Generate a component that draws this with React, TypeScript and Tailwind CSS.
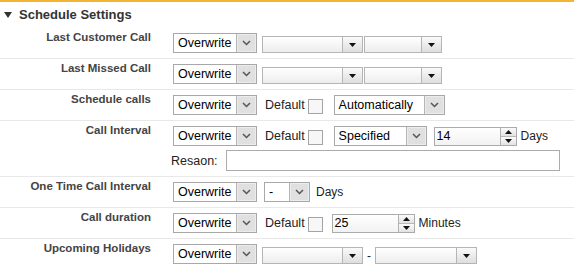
import React from "react";

function Chevron() {
  return (
    <svg width="9" height="6" viewBox="0 0 9 6">
      <path d="M1 1 L4.5 4.5 L8 1" stroke="#555" strokeWidth="1.5" fill="none" />
    </svg>
  );
}

function DownTri() {
  return (
    <svg width="7" height="4" viewBox="0 0 7 4">
      <polygon points="0,0 7,0 3.5,4" fill="#111" />
    </svg>
  );
}

function UpTri() {
  return (
    <svg width="7" height="4" viewBox="0 0 7 4">
      <polygon points="0,4 7,4 3.5,0" fill="#111" />
    </svg>
  );
}

function Select({ value, w }: { value: string; w: string }) {
  return (
    <div className={`flex h-[20px] border border-[#a8a8a8] bg-white shrink-0 ${w}`}>
      <span className="flex-1 pl-[4px] text-[12.5px] leading-[18px] text-black whitespace-nowrap overflow-hidden">{value}</span>
      <div className="w-[20px] border-l border-[#b4b4b4] bg-[#e0e0e0] flex items-center justify-center shadow-[inset_0_0_0_1px_#ececec]">
        <Chevron />
      </div>
    </div>
  );
}

function Combo({ w }: { w: string }) {
  return (
    <div className={`flex h-[17px] self-end border border-[#b5b5b5] bg-linear-to-b from-white to-[#ededed] shrink-0 ${w}`}>
      <span className="flex-1" />
      <div className="w-[20px] border-l border-[#b5b5b5] bg-linear-to-b from-[#fafafa] to-[#dedede] flex items-center justify-center">
        <DownTri />
      </div>
    </div>
  );
}

function Spinner({ value, w }: { value: string; w: string }) {
  return (
    <div className={`flex h-[19px] self-end border border-[#ababab] bg-linear-to-b from-white to-[#f2f2f2] shrink-0 ${w}`}>
      <span className="flex-1 pl-[2px] text-[12.5px] leading-[17px] text-black">{value}</span>
      <div className="w-[16px] border-l border-[#b0b0b0] flex flex-col">
        <div className="flex-1 flex items-center justify-center bg-linear-to-b from-[#fbfbfb] to-[#e2e2e2] border-b border-[#b8b8b8]">
          <UpTri />
        </div>
        <div className="flex-1 flex items-center justify-center bg-linear-to-b from-[#fbfbfb] to-[#e2e2e2]">
          <DownTri />
        </div>
      </div>
    </div>
  );
}

function Check() {
  return <div className="w-[15px] h-[15px] self-end mb-[1px] border border-[#a4a4a4] bg-[#f7f7f7] shrink-0" />;
}

function Txt({ children, cls = "" }: { children: React.ReactNode; cls?: string }) {
  return <span className={`text-[12.5px] leading-[16px] text-[#222] whitespace-nowrap ${cls}`}>{children}</span>;
}

function Row({ label, children, extra }: { label: string; children: React.ReactNode; extra?: React.ReactNode }) {
  return (
    <div className="flex border-b border-[#e8e8e8] pt-[3px] pb-[5px]">
      <div className="w-[151px] shrink-0 text-right font-bold text-[11.5px] leading-[12px] text-[#444] whitespace-nowrap">{label}</div>
      <div className="ml-[22px] pt-[2px] flex flex-col gap-[4px]">
        <div className="flex items-center h-[20px]">{children}</div>
        {extra}
      </div>
    </div>
  );
}

export default function App() {
  return (
    <div className="w-[574px] h-[278px] bg-white border-t-2 border-[#f2b431] font-['Liberation_Sans',Arial,sans-serif] overflow-hidden">
      <div className="flex items-center pt-[5px] pb-[5px] h-[26px]">
        <svg className="ml-[4px]" width="8" height="6" viewBox="0 0 8 6">
          <polygon points="0,0 8,0 4,6" fill="#333" />
        </svg>
        <span className="ml-[7px] font-bold text-[13px] leading-[16px] text-[#333]">Schedule Settings</span>
      </div>

      <Row label="Last Customer Call">
        <Select value="Overwrite" w="w-[84px]" />
        <div className="ml-[5px] flex gap-[1px] self-end">
          <Combo w="w-[101px]" />
          <Combo w="w-[78px]" />
        </div>
      </Row>

      <Row label="Last Missed Call">
        <Select value="Overwrite" w="w-[84px]" />
        <div className="ml-[5px] flex gap-[1px] self-end">
          <Combo w="w-[101px]" />
          <Combo w="w-[78px]" />
        </div>
      </Row>

      <Row label="Schedule calls">
        <Select value="Overwrite" w="w-[84px]" />
        <Txt cls="ml-[8px]">Default</Txt>
        <div className="ml-[3px] flex self-end"><Check /></div>
        <div className="ml-[11px]"><Select value="Automatically" w="w-[111px]" /></div>
      </Row>

      <Row
        label="Call Interval"
        extra={
          <div className="flex items-center h-[21px]">
            <Txt cls="-ml-[2px]">Resaon:</Txt>
            <div className="ml-[8px] w-[334px] h-[21px] border border-[#ababab] bg-white" />
          </div>
        }
      >
        <Select value="Overwrite" w="w-[84px]" />
        <Txt cls="ml-[8px]">Default</Txt>
        <div className="ml-[3px] flex self-end"><Check /></div>
        <div className="ml-[11px]"><Select value="Specified" w="w-[93px]" /></div>
        <div className="ml-[7px] flex self-end"><Spinner value="14" w="w-[83px]" /></div>
        <Txt cls="ml-[4px] text-[12px]">Days</Txt>
      </Row>

      <Row label="One Time Call Interval">
        <Select value="Overwrite" w="w-[84px]" />
        <div className="ml-[7px]"><Select value="-" w="w-[46px]" /></div>
        <Txt cls="ml-[6px] text-[12px]">Days</Txt>
      </Row>

      <Row label="Call duration">
        <Select value="Overwrite" w="w-[84px]" />
        <Txt cls="ml-[8px]">Default</Txt>
        <div className="ml-[3px] flex self-end"><Check /></div>
        <div className="ml-[9px] flex self-end"><Spinner value="25" w="w-[83px]" /></div>
        <Txt cls="ml-[4px] text-[12px]">Minutes</Txt>
      </Row>

      <div className="flex pt-[3px] pb-[5px]">
        <div className="w-[151px] shrink-0 text-right font-bold text-[11.5px] leading-[12px] text-[#444] whitespace-nowrap">Upcoming Holidays</div>
        <div className="ml-[22px] pt-[2px] flex items-center h-[22px]">
          <Select value="Overwrite" w="w-[84px]" />
          <div className="ml-[5px] flex items-center self-end">
            <Combo w="w-[101px]" />
            <Txt cls="mx-[4px] text-[12px]">-</Txt>
            <Combo w="w-[102px]" />
          </div>
        </div>
      </div>
    </div>
  );
}
